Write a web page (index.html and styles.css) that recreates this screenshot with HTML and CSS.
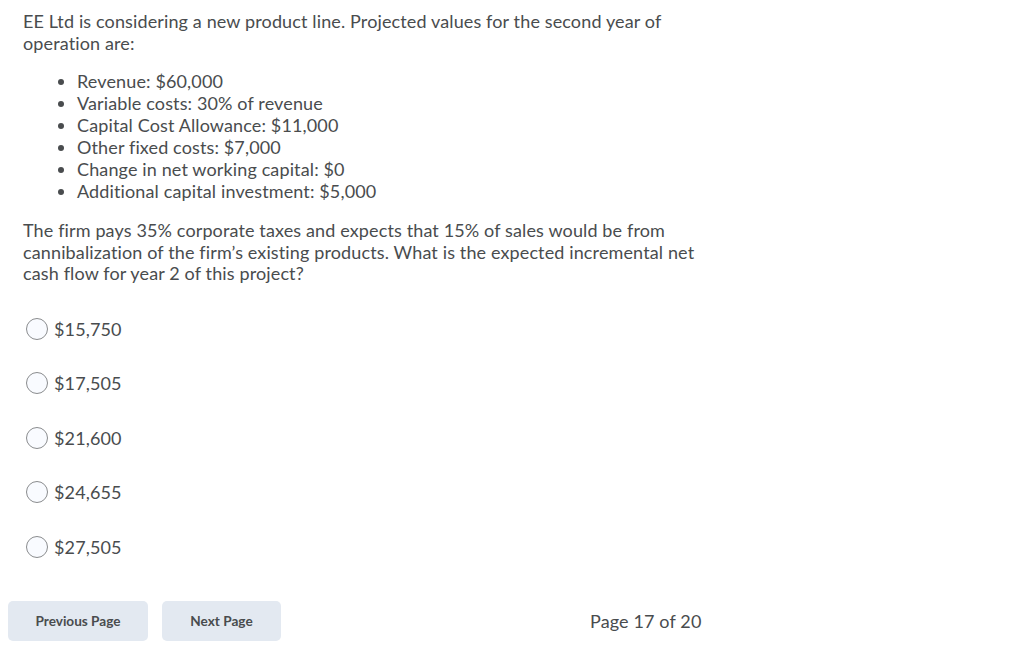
FILE: index.html
```html
<!DOCTYPE html>
<html>
<head>
<meta charset="utf-8">
<link rel="stylesheet" href="styles.css">
</head>
<body>
<div class="page">
  <p class="intro">EE Ltd is considering a new product line. Projected values for the second year of operation are:</p>
  <ul class="facts">
    <li>Revenue: $60,000</li>
    <li>Variable costs: 30% of revenue</li>
    <li>Capital Cost Allowance: $11,000</li>
    <li>Other fixed costs: $7,000</li>
    <li>Change in net working capital: $0</li>
    <li>Additional capital investment: $5,000</li>
  </ul>
  <p class="question">The firm pays 35% corporate taxes and expects that 15% of sales would be from cannibalization of the firm’s existing products. What is the expected incremental net cash flow for year 2 of this project?</p>
  <div class="options">
    <label class="option"><span class="radio"></span><span>$15,750</span></label>
    <label class="option"><span class="radio"></span><span>$17,505</span></label>
    <label class="option"><span class="radio"></span><span>$21,600</span></label>
    <label class="option"><span class="radio"></span><span>$24,655</span></label>
    <label class="option"><span class="radio"></span><span>$27,505</span></label>
  </div>
  <div class="nav">
    <button class="btn btn-prev">Previous Page</button>
    <button class="btn btn-next">Next Page</button>
    <span class="pageno">Page 17 of 20</span>
  </div>
</div>
</body>
</html>
```
FILE: styles.css
```css
html, body {
  margin: 0;
  padding: 0;
  background: #fff;
}
body {
  font-family: Lato, "Noto Sans", sans-serif;
  color: #494c4e;
  font-size: 18px;
  letter-spacing: 0.13px;
  font-variant-ligatures: none;
}
.page {
  padding: 10px 0 0 23px;
  width: 700px;
}
.intro {
  margin: 0;
  line-height: 22px;
  width: 660px;
}
.facts {
  margin: 16px 0 0 0;
  padding-left: 54px;
  line-height: 22px;
}
.question {
  margin: 18px 0 0 0;
  line-height: 21.5px;
  width: 690px;
}
.options {
  margin-top: 28px;
  display: flex;
  flex-direction: column;
}
.option {
  display: flex;
  align-items: center;
  height: 54.5px;
  gap: 6px;
  margin-left: 3px;
}
.option:first-child {
  margin-top: -11px;
}
.radio {
  width: 20px;
  height: 20px;
  border: 1px solid #8a8c8e;
  border-radius: 50%;
  background: #f9fbff;
  box-sizing: content-box;
}
.nav {
  display: flex;
  align-items: center;
  margin-left: -15px;
  margin-top: 27px;
}
.btn {
  font-family: Lato, "Noto Sans", sans-serif;
  font-weight: 700;
  font-size: 13.6px;
  letter-spacing: 0;
  color: #494c4e;
  background: #e3e9f1;
  border: none;
  border-radius: 5px;
  height: 40px;
  padding: 0;
}
.btn-prev {
  width: 140px;
}
.btn-next {
  width: 119px;
  margin-left: 14px;
}
.pageno {
  margin-left: 309px;
}
```
